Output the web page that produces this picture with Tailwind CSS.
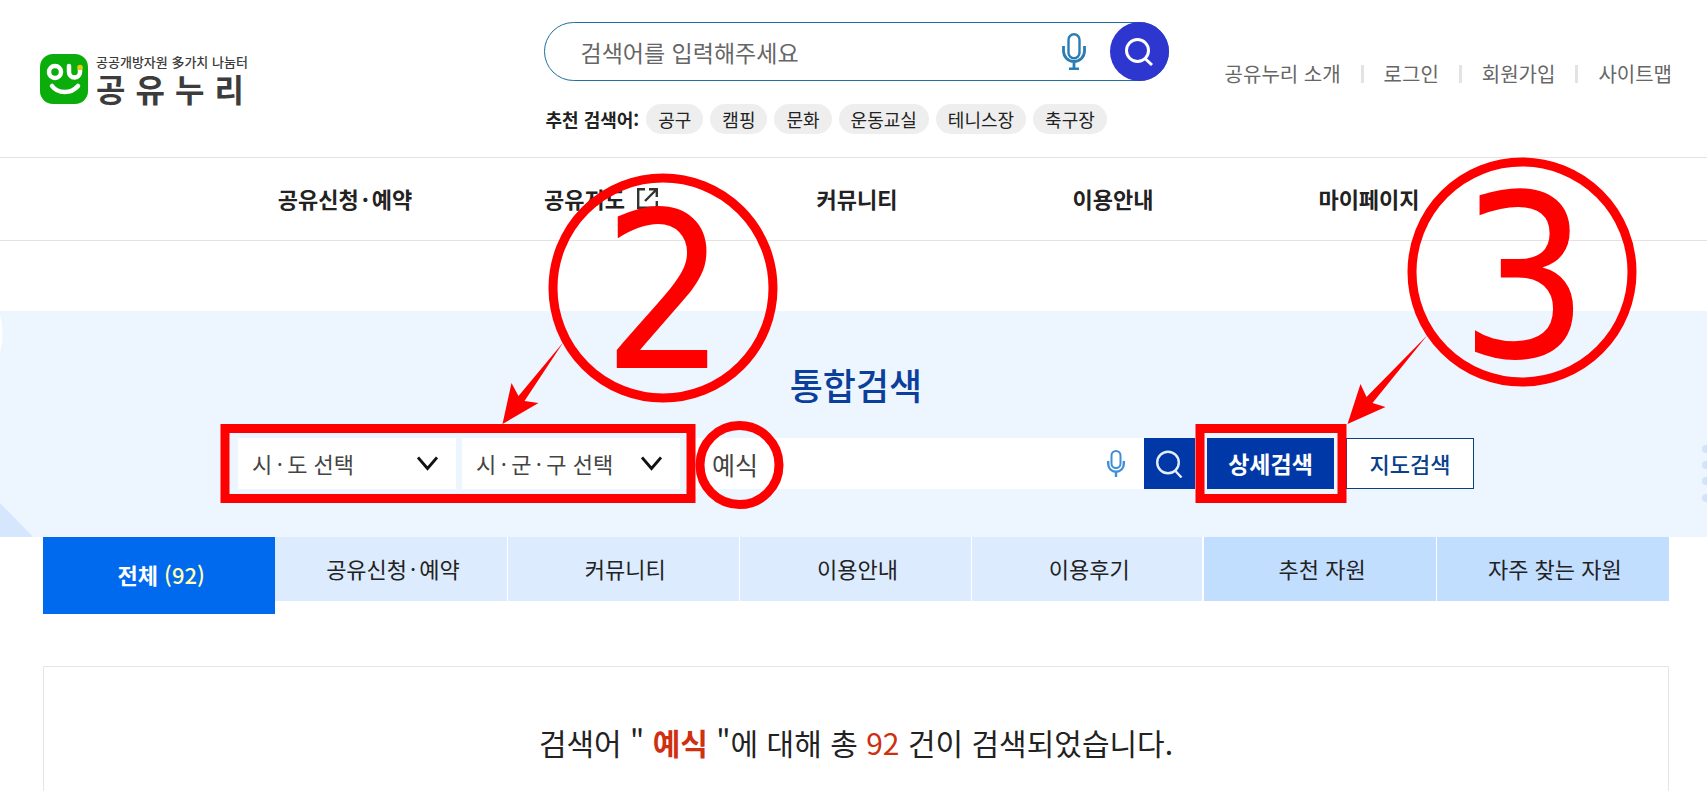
<!DOCTYPE html>
<html lang="ko">
<head>
    <meta charset="UTF-8">
    <meta name="viewport" content="width=device-width, initial-scale=1.0">
    <title>통합검색 | 공유누리</title>
    <script src="https://cdn.jsdelivr.net/npm/@tailwindcss/browser@4"></script>
</head>
<body class="bg-white text-[#222] font-['Noto_Sans_CJK_KR',sans-serif]">
<div class="relative min-h-screen overflow-hidden">

    <!-- 상단 헤더 -->
    <header>
        <div class="grid grid-cols-[1fr_625px_1fr] pl-10 pr-[35px] h-[157px]">
            <a href="#" class="flex items-center gap-2 self-start pt-[53px]">
                <svg class="w-12 h-[50px] shrink-0" viewBox="0 0 48 50" fill="none">
                    <rect width="48" height="50" rx="13" fill="#0aad0a"/>
                    <circle cx="15" cy="18" r="6" stroke="#fff" stroke-width="4.5"/>
                    <path d="M29 12v6a5.500 5.500 0 0 0 11 0v-3" stroke="#fff" stroke-width="4.500" stroke-linecap="round"/>
                    <circle cx="40" cy="13.500" r="2.800" fill="#e3c814"/>
                    <path d="M12 32c6 8 19 8 26 0" stroke="#fff" stroke-width="4.500" stroke-linecap="round"/>
                </svg>
                <span class="block w-[148px] text-[#3c3c3c]">
                    <span class="block text-[13px] leading-[18px] font-medium whitespace-nowrap">공공개방자원 多가치 나눔터</span>
                    <span class="flex justify-between text-[32px] leading-[34px] font-bold"><span>공</span><span>유</span><span>누</span><span>리</span></span>
                </span>
            </a>

            <div class="pt-[22px]">
                <form class="flex items-center h-[59px] rounded-full border border-[#1f6f9f]">
                    <input type="text" aria-label="검색어" placeholder="검색어를 입력해주세요" class="flex-1 min-w-0 h-full pl-9 text-[23px] outline-none placeholder:text-[#666]">
                    <button type="button" aria-label="음성 검색" class="w-6 h-[37px] mr-6">
                        <svg class="w-6 h-[37px]" viewBox="0 0 24 37" fill="none" stroke="#2a7db3" stroke-width="2.400">
                            <rect x="6.500" y="1.200" width="11" height="24" rx="5.500"/>
                            <path d="M1.500 13v5a10.500 10.500 0 0 0 21 0v-5M12 29v7M7 36h10" stroke-width="2.800"/>
                        </svg>
                    </button>
                    <button type="submit" aria-label="검색" class="flex items-center justify-center size-[59px] -mr-px rounded-full bg-[#2e36d0]">
                        <svg class="size-7" viewBox="0 0 28 28" fill="none" stroke="#fff" stroke-width="3">
                            <circle cx="12.500" cy="12.500" r="11"/>
                            <path d="M19.500 20l7.500 7"/>
                        </svg>
                    </button>
                </form>
                <div class="flex items-center gap-[7px] mt-[23px] pl-[2px] text-lg leading-[30px]">
                    <b class="whitespace-nowrap">추천 검색어:</b>
                    <a href="#" class="px-3 rounded-full bg-[#eee]">공구</a>
                    <a href="#" class="px-3 rounded-full bg-[#eee]">캠핑</a>
                    <a href="#" class="px-3 rounded-full bg-[#eee]">문화</a>
                    <a href="#" class="px-3 rounded-full bg-[#eee]">운동교실</a>
                    <a href="#" class="px-3 rounded-full bg-[#eee]">테니스장</a>
                    <a href="#" class="px-3 rounded-full bg-[#eee]">축구장</a>
                </div>
            </div>

            <ul class="flex items-center justify-end self-start mt-[59px] gap-5 text-xl leading-[30px] text-[#666] whitespace-nowrap">
                <li><a href="#">공유누리 소개</a></li>
                <li class="w-[3px] h-[18px] bg-[#e3e3e3]"></li>
                <li><a href="#">로그인</a></li>
                <li class="w-[3px] h-[18px] bg-[#e3e3e3]"></li>
                <li><a href="#">회원가입</a></li>
                <li class="w-[3px] h-[18px] bg-[#e3e3e3]"></li>
                <li><a href="#">사이트맵</a></li>
            </ul>
        </div>

        <!-- 메인 메뉴 -->
        <nav class="border-y border-[#e2e2e2] pl-[42px] pr-[35px]">
            <ul class="grid grid-cols-5 max-w-[1280px] mx-auto pb-[2px] text-center text-[22px] leading-[80px] font-bold">
                <li><a href="#">공유신청<span class="mx-[3px]">·</span>예약</a></li>
                <li>
                    <a href="#" class="flex items-center justify-center gap-3">공유지도
                        <svg class="size-[21px]" viewBox="0 0 21 21" fill="none" stroke="#333" stroke-width="2.400">
                            <path d="M8 1.200H1.200v18.600h18.600v-6.800M12 1.200h7.800v7.800M19.500 1.500L8 13"/>
                        </svg>
                    </a>
                </li>
                <li><a href="#">커뮤니티</a></li>
                <li><a href="#">이용안내</a></li>
                <li><a href="#">마이페이지</a></li>
            </ul>
        </nav>
    </header>

    <main class="pt-[70px]">
        <!-- 통합검색 -->
        <section class="relative h-[226px] pl-10 pr-[35px] bg-[#edf5fe]">
            <svg class="absolute left-0 top-0 w-9 h-full" viewBox="0 0 36 226">
                <path d="M0 4q5 18 0 38z" fill="#fff"/>
                <path d="M0 192l33 34H0z" fill="#d5e6fd"/>
            </svg>
            <svg class="absolute right-0 top-[132px] w-2 h-16" viewBox="0 0 8 64" fill="#d3e3fb">
                <circle cx="7" cy="6" r="4"/><circle cx="7" cy="22" r="4"/><circle cx="7" cy="38" r="4"/><circle cx="7" cy="55" r="4"/>
            </svg>
            <h1 class="pt-[46px] text-center text-[36px] leading-[54px] font-medium text-[#0a3f9c]">통합검색</h1>
            <form class="flex max-w-[1236px] h-[51px] mx-auto mt-[27px] text-[22px] text-[#444]">
                <div class="relative w-[218px] mr-[6px]">
                    <select aria-label="시·도 선택" class="appearance-none size-full pl-[14px] bg-white">
                        <option>시&thinsp;·&thinsp;도 선택</option>
                    </select>
                    <svg class="absolute right-[18px] top-[18px] w-[21px] h-[15px] pointer-events-none" viewBox="0 0 21 15" fill="none" stroke="#111" stroke-width="2.800"><path d="M1 1.500l9.500 11 9.500-11"/></svg>
                </div>
                <div class="relative w-[218px] mr-[6px]">
                    <select aria-label="시·군·구 선택" class="appearance-none size-full pl-[14px] bg-white">
                        <option>시&thinsp;·&thinsp;군&thinsp;·&thinsp;구 선택</option>
                    </select>
                    <svg class="absolute right-[18px] top-[18px] w-[21px] h-[15px] pointer-events-none" viewBox="0 0 21 15" fill="none" stroke="#111" stroke-width="2.800"><path d="M1 1.500l9.500 11 9.500-11"/></svg>
                </div>
                <div class="flex flex-1 items-center min-w-0 bg-white">
                    <input type="text" aria-label="통합검색어" value="예식" class="flex-1 min-w-0 h-full pl-[26px] text-[25px] outline-none">
                    <button type="button" aria-label="음성 검색" class="w-[18px] h-[27px] mr-[19px]">
                        <svg class="w-[18px] h-[27px]" viewBox="0 0 18 27" fill="none" stroke="#3f8fd6" stroke-width="2">
                            <rect x="4.500" y="1" width="9" height="17" rx="4.500"/>
                            <path d="M1.200 11v3a7.800 7.800 0 0 0 15.600 0v-3M9 22v5" stroke-width="2.400"/>
                        </svg>
                    </button>
                    <button type="submit" aria-label="검색" class="flex items-center justify-center w-[51px] h-full bg-[#0038a8]">
                        <svg class="size-7" viewBox="0 0 28 28" fill="none" stroke="#e4eefc" stroke-width="2.400">
                            <circle cx="12" cy="12.500" r="10.800"/>
                            <path d="M19 20.500l6.500 7"/>
                        </svg>
                    </button>
                </div>
                <button type="button" class="w-[127px] ml-3 bg-[#0038a8] text-[23px] font-bold text-white">상세검색</button>
                <button type="button" class="w-32 ml-3 border border-[#0a4080] bg-white font-medium text-[#0a3f8c]">지도검색</button>
            </form>
        </section>

        <!-- 검색 결과 탭 -->
        <div class="pl-[43px] pr-[38px]">
            <ul class="grid grid-cols-7 h-[77px] text-center text-[22px] leading-[62px]">
                <li><a href="#" class="block h-[77px] pl-1 leading-[74px] bg-[#006aee] font-bold text-white">전체 <span class="font-medium text-[#ffffb0]">(92)</span></a></li>
                <li><a href="#" class="block pl-1 pb-[2px] border-r border-white bg-[#dcebfd]">공유신청<span class="mx-[3px]">·</span>예약</a></li>
                <li><a href="#" class="block pl-1 pb-[2px] border-r border-white bg-[#dcebfd]">커뮤니티</a></li>
                <li><a href="#" class="block pl-1 pb-[2px] border-r border-white bg-[#dcebfd]">이용안내</a></li>
                <li><a href="#" class="block pl-1 pb-[2px] border-r-2 border-white bg-[#dcebfd]">이용후기</a></li>
                <li><a href="#" class="block pl-1 pb-[2px] border-r border-white bg-[#c2deff]">추천 자원</a></li>
                <li><a href="#" class="block pl-1 pb-[2px] bg-[#c2deff]">자주 찾는 자원</a></li>
            </ul>
            <div class="mt-[52px] pt-[52px] pb-[26px] border border-b-0 border-[#e5e5e5] text-center text-[30px] leading-[46px]">
                <p>검색어 " <strong class="text-[#cf3012]">예식</strong> "에 대해 총 <span class="text-[#cf3012]">92</span> 건이 검색되었습니다.</p>
            </div>
        </div>
    </main>

    <!-- 안내 표시 (단계 번호, 화살표, 강조 박스) -->
    <svg class="absolute top-0 left-1/2 -translate-x-1/2 w-[1707px] h-[791px] pointer-events-none font-['DejaVu_Sans_Condensed','DejaVu_Sans',sans-serif]" viewBox="0 0 1707 791" fill="none" stroke="#f00" stroke-width="9">
        <rect x="224.500" y="428.500" width="466" height="70"/>
        <rect x="1199.500" y="428.500" width="142" height="70"/>
        <circle cx="739" cy="465" r="39.500"/>
        <circle cx="662.500" cy="288" r="110"/>
        <circle cx="1521.500" cy="272" r="110"/>
        <g fill="#f00" stroke="none">
            <path d="M563 342L518 396l-7-13-9 41 36-21-14-2z"/>
            <path d="M1427 335l-61 62-6-13-13 40 38-17-13-4z"/>
            <text x="664" y="368" font-size="217" text-anchor="middle">2</text>
            <text x="1524" y="357" font-size="227" text-anchor="middle">3</text>
        </g>
    </svg>
</div>
</body>
</html>
